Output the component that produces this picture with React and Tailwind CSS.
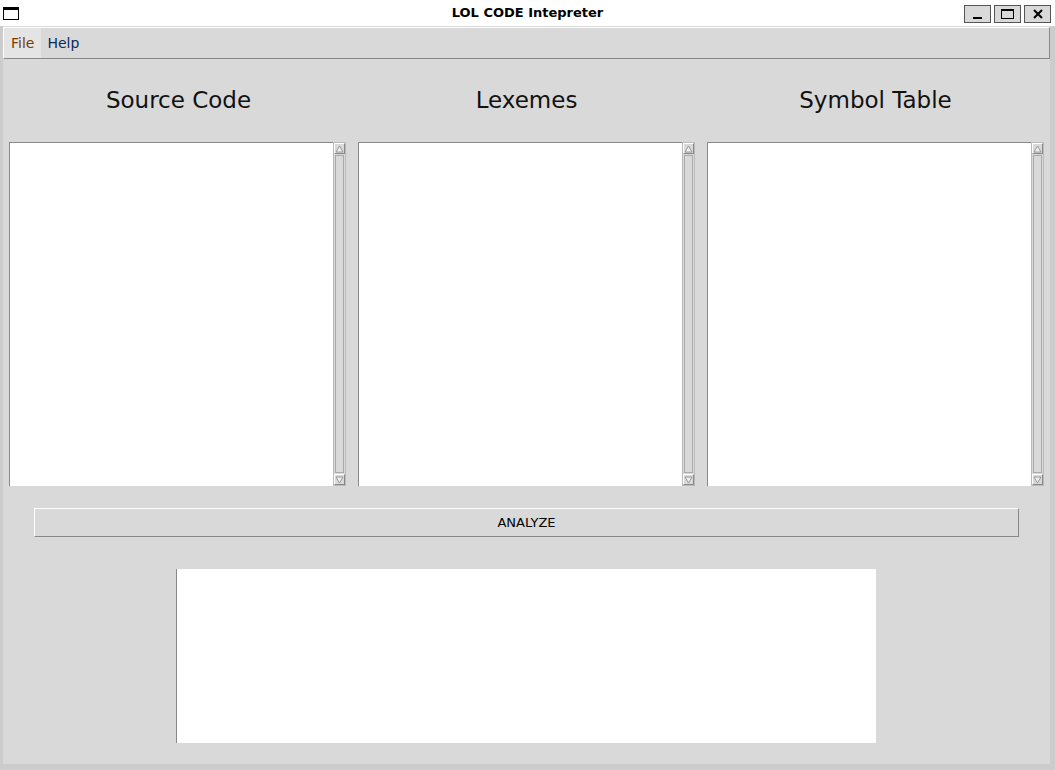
export default function App() {
  const font = { fontFamily: '"DejaVu Sans", sans-serif' };
  const Panel = () => (
    <div className="flex h-[344px] w-[337px]">
      <div className="flex-1 bg-white border-l border-t border-[#888]"></div>
      <div className="w-[13px] bg-[#d9d9d9] border border-[#bbb] flex flex-col items-center">
        <div className="w-[11px] h-[11px] bg-[#d9d9d9] border-t border-l border-white border-r border-b border-r-[#888] border-b-[#888] flex items-center justify-center">
          <svg width="9" height="8"><path d="M4.5 1 L8 7 L1 7 Z" fill="#eee" stroke="#888" strokeWidth="0.8"/></svg>
        </div>
        <div className="flex-1 w-[9px] my-[1px] border border-[#aaa] bg-[#d9d9d9]"></div>
        <div className="w-[11px] h-[11px] bg-[#d9d9d9] border-t border-l border-white border-r border-b border-r-[#888] border-b-[#888] flex items-center justify-center">
          <svg width="9" height="8"><path d="M1 1 L8 1 L4.5 7 Z" fill="#eee" stroke="#888" strokeWidth="0.8"/></svg>
        </div>
      </div>
    </div>
  );
  return (
    <div className="w-[1055px] h-[770px] bg-[#cccccc] flex flex-col" style={font}>
      <div className="h-[26px] bg-white flex items-center relative">
        <div className="absolute left-[3px] top-[7px] w-[16px] h-[13px] border border-black border-t-[3px]"></div>
        <div className="flex-1 text-center text-[13px] font-bold">LOL CODE Intepreter</div>
        <div className="absolute right-[4px] top-[5px] flex gap-[3px]">
          {["min", "max", "x"].map((k) => (
            <div key={k} className="w-[27px] h-[18px] bg-[#d9d9d9] border border-[#555] flex items-center justify-center">
              {k === "min" && <div className="w-[9px] h-[2px] bg-black mt-[8px]"></div>}
              {k === "max" && <div className="w-[13px] h-[10px] border border-black border-t-2"></div>}
              {k === "x" && <svg width="10" height="10"><path d="M1 1L9 9M9 1L1 9" stroke="black" strokeWidth="2"/></svg>}
            </div>
          ))}
        </div>
      </div>
      <div className="flex-1 mx-[3px] mr-[5px] mb-[6px] bg-[#d9d9d9] flex flex-col">
        <div className="h-[32px] mt-[1px] border border-white border-r-[#888] border-b-[#888] flex items-stretch text-[14px]">
          <div className="px-[7px] flex items-center bg-[#e4e4e4] text-[#7a3b00]">File</div>
          <div className="px-[6px] flex items-center text-[#0a2a5a]">Help</div>
        </div>
        <div className="flex h-[83px] items-center text-[23px] text-[#111]">
          <div className="w-[349px] text-center pl-[2px]">Source Code</div>
          <div className="w-[349px] text-center">Lexemes</div>
          <div className="w-[349px] text-center">Symbol Table</div>
        </div>
        <div className="flex gap-[12px] pl-[6px]">
          <Panel /><Panel /><Panel />
        </div>
        <div className="mt-[22px] ml-[31px] w-[985px] h-[29px] border border-white border-r-[#888] border-b-[#888] flex items-center justify-center text-[13px]">ANALYZE</div>
        <div className="mt-[32px] ml-[173px] w-[700px] h-[174px] bg-white border-l border-[#888]"></div>
      </div>
    </div>
  );
}
